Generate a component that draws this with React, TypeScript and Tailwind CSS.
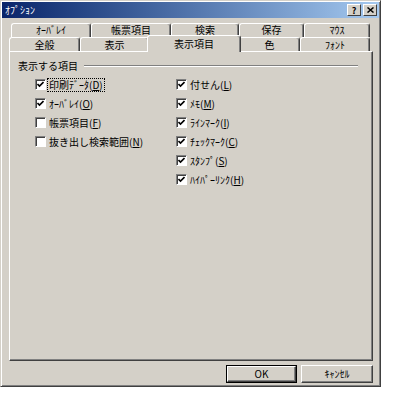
import { ReactNode } from 'react';

const backTabs = [
  { label: 'ｵｰﾊﾞﾚｲ', w: 'w-[80px]' },
  { label: '帳票項目', w: 'w-[80px]' },
  { label: '検索', w: 'w-[68px]' },
  { label: '保存', w: 'w-[65px]' },
  { label: 'ﾏｳｽ', w: 'w-[66px]' },
];

const leftItems: { text: string; key: string; rest?: string; checked: boolean; focus?: boolean }[] = [
  { text: '印刷ﾃﾞｰﾀ(', key: 'D', rest: ')', checked: true, focus: true },
  { text: 'ｵｰﾊﾞﾚｲ(', key: 'O', rest: ')', checked: true },
  { text: '帳票項目(', key: 'F', rest: ')', checked: false },
  { text: '抜き出し検索範囲(', key: 'N', rest: ')', checked: false },
];

const rightItems = [
  { text: '付せん(', key: 'L', rest: ')', checked: true },
  { text: 'ﾒﾓ(', key: 'M', rest: ')', checked: true },
  { text: 'ﾗｲﾝﾏｰｸ(', key: 'I', rest: ')', checked: true },
  { text: 'ﾁｪｯｸﾏｰｸ(', key: 'C', rest: ')', checked: true },
  { text: 'ｽﾀﾝﾌﾟ(', key: 'S', rest: ')', checked: true },
  { text: 'ﾊｲﾊﾟｰﾘﾝｸ(', key: 'H', rest: ')', checked: true },
];

const Tab = ({ children, w, back }: { children: ReactNode; w: string; back?: boolean }) => (
  <div
    className={`${w} h-[14px] flex justify-center ${back ? 'items-start pt-[1px]' : 'items-center'} border-t border-l border-white border-r border-r-[#404040] shadow-[inset_-1px_0_0_#808080] rounded-t-[3px]`}
  >
    {children}
  </div>
);

const CheckBox = ({ checked }: { checked: boolean }) => (
  <div className="w-[11px] h-[11px] bg-white border-t border-l border-[#808080] border-r border-b border-r-white border-b-white shadow-[inset_1px_1px_0_#404040] flex items-center justify-center shrink-0">
    {checked && (
      <svg width="7" height="7" viewBox="0 0 7 7">
        <path d="M0.5 3 L2.5 5 L6.5 1" stroke="#000" strokeWidth="1.6" fill="none" />
      </svg>
    )}
  </div>
);

const Item = ({ text, k, rest, checked, focus }: { text: string; k: string; rest?: string; checked: boolean; focus?: boolean }) => (
  <div className="h-[19px] flex items-center">
    <CheckBox checked={checked} />
    <span className={`ml-[2px] px-[1px] py-[1px] ${focus ? 'outline outline-1 outline-dotted outline-black' : ''}`}>
      {text}
      <u>{k}</u>
      {rest}
    </span>
  </div>
);

const Button = ({ children, def }: { children: ReactNode; def?: boolean }) => (
  <div className={`h-[18px] ${def ? 'w-[71px] border border-black' : 'w-[72px]'}`}>
    <div className="w-full h-full flex items-center justify-center border-t border-l border-white border-r border-b border-r-[#404040] border-b-[#404040] shadow-[inset_-1px_-1px_0_#808080]">
      {children}
    </div>
  </div>
);

export default function App() {
  return (
    <div className="w-[396px] h-[396px] bg-white font-['Noto_Sans_CJK_JP',sans-serif] text-[10px] leading-none text-black">
      <div className="w-[381px] h-[387px] bg-[#d4d0c8] border border-t-[#d4d0c8] border-l-[#d4d0c8] border-r-[#404040] border-b-[#404040] shadow-[inset_1px_1px_0_#fff,inset_-1px_-1px_0_#808080] p-[1px] flex flex-col">
        {/* Title bar */}
        <div className="h-[16px] bg-gradient-to-r from-[#0a246a] to-[#a6caf0] flex items-center pl-[3px] pr-[2px]">
          <span className="text-white text-[10px]">ｵﾌﾟｼｮﾝ</span>
          <div className="ml-auto flex gap-[2px]">
            <div className="w-[14px] h-[12px] bg-[#d4d0c8] border-t border-l border-white border-r border-b border-r-[#404040] border-b-[#404040] flex items-center justify-center font-bold text-[9px]">
              ?
            </div>
            <div className="w-[14px] h-[12px] bg-[#d4d0c8] border-t border-l border-white border-r border-b border-r-[#404040] border-b-[#404040] flex items-center justify-center">
              <svg width="7" height="6" viewBox="0 0 7 6">
                <path d="M0.5 0.5 L6.5 5.5 M6.5 0.5 L0.5 5.5" stroke="#000" strokeWidth="1.5" />
              </svg>
            </div>
          </div>
        </div>

        {/* Tabs */}
        <div className="mt-[5px] pl-[9px] flex">
          {backTabs.map((t) => (
            <Tab key={t.label} w={t.w} back>
              {t.label}
            </Tab>
          ))}
        </div>
        <div className="pl-[7px] flex items-end">
          <Tab w="w-[71px]">全般</Tab>
          <Tab w="w-[69px]">表示</Tab>
          <div className="relative z-10 -mx-[2px] -mt-[2px] -mb-[1px] w-[94px] h-[17px] bg-[#d4d0c8] flex items-start justify-center pt-[3px] border-t border-l border-white border-r border-r-[#404040] shadow-[inset_-1px_0_0_#808080] rounded-t-[3px]">
            表示項目
          </div>
          <Tab w="w-[61px]">色</Tab>
          <Tab w="w-[70px]">ﾌｫﾝﾄ</Tab>
        </div>

        {/* Panel */}
        <div className="ml-[7px] w-[364px] h-[310px] border-t border-l border-white border-r border-b border-r-[#404040] border-b-[#404040] shadow-[inset_-1px_-1px_0_#808080] pt-[9px] pl-[8px] pr-[14px]">
          <div className="flex items-center">
            <span>表示する項目</span>
            <div className="flex-1 ml-[6px] h-[2px] border-t border-[#808080] border-b border-b-white" />
          </div>
          <div className="mt-[4px] pl-[17px] flex">
            <div className="w-[141px] flex flex-col">
              {leftItems.map((it) => (
                <Item key={it.key} text={it.text} k={it.key} rest={it.rest} checked={it.checked} focus={it.focus} />
              ))}
            </div>
            <div className="flex flex-col">
              {rightItems.map((it) => (
                <Item key={it.key} text={it.text} k={it.key} rest={it.rest} checked={it.checked} />
              ))}
            </div>
          </div>
        </div>

        {/* Buttons */}
        <div className="mt-[4px] pl-[224px] flex gap-[4px]">
          <Button def>OK</Button>
          <Button>ｷｬﾝｾﾙ</Button>
        </div>
      </div>
    </div>
  );
}
